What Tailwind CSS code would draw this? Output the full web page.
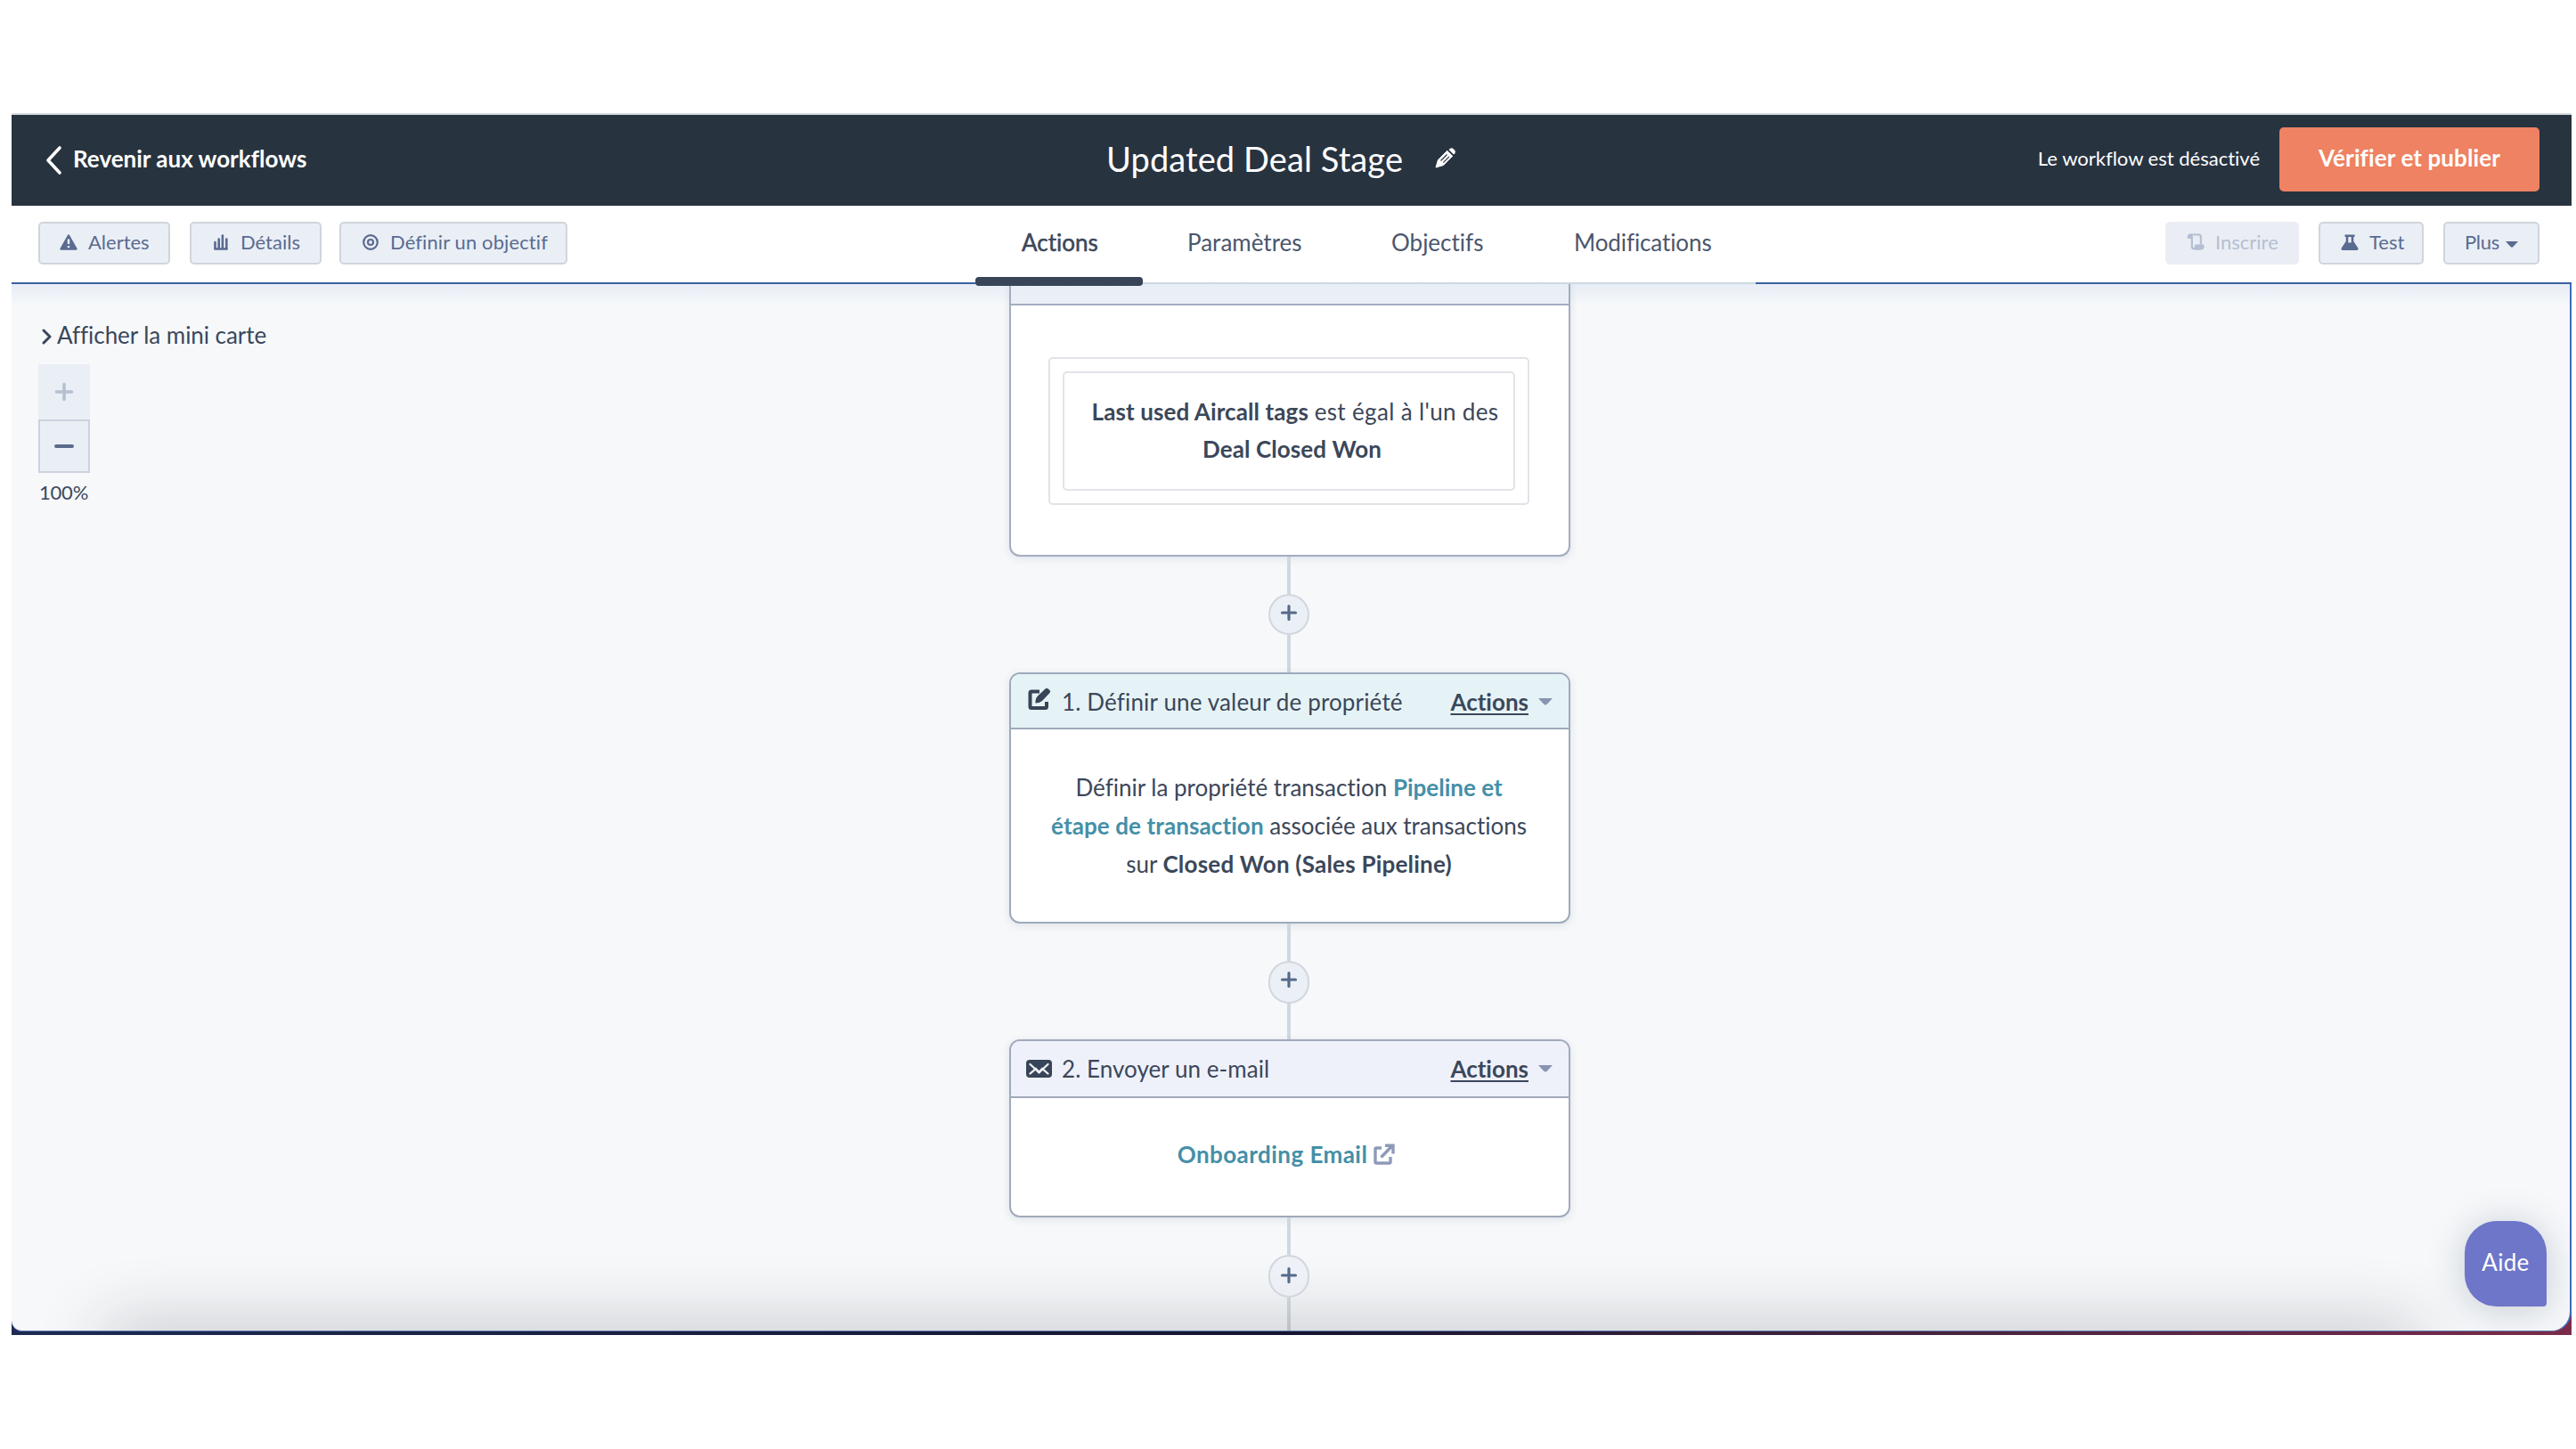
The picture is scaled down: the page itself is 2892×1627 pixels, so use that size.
<!DOCTYPE html>
<html lang="fr">
<head>
    <meta charset="UTF-8">
    <meta name="viewport" content="width=device-width, initial-scale=1.0">
    <title>Updated Deal Stage</title>
    <script src="https://cdn.jsdelivr.net/npm/@tailwindcss/browser@4"></script>
</head>
<body class="bg-white font-['Lato',sans-serif] text-[26px] text-[#3b475a] whitespace-nowrap [font-variant-ligatures:none]">
    <div class="mt-[127px] ml-[13px] w-[2874px] h-[1372px] flex flex-col border-t-2 border-[#d5dae1]">

        <!-- Header -->
        <header class="h-[102px] shrink-0 flex items-center bg-[#283340] text-white pr-9">
            <div class="w-[1229px] flex items-center pl-[37px] pb-[3px]">
                <svg class="w-[20px] h-[34px] mt-0.5" viewBox="0 0 20 34" fill="none" stroke="currentColor" stroke-width="3.6" stroke-linecap="round" stroke-linejoin="round"><path d="M17 3 L4 17 L17 31"/></svg>
                <span class="ml-[12px] font-bold">Revenir aux workflows</span>
            </div>
            <h1 class="text-[38px] leading-none pb-1 tracking-[0.100px]">Updated Deal Stage</h1>
            <svg class="w-[24px] h-[24px] ml-[36px] mb-1.5" viewBox="0 0 24 24">
                <path d="M1 23 L3.500 14.500 L14 4 L20 10 L9.500 20.500 Z" fill="#fff" stroke="#fff" stroke-width="1" stroke-linejoin="round"/>
                <path d="M15.500 3 L17 1.800 Q19 0.500 21 2.500 L22 3.500 Q23.800 5.500 22.300 7.300 L21 8.600 Z" fill="#fff"/>
                <path d="M14.300 3.600 L20.600 9.900" stroke="#283340" stroke-width="1.300"/>
                <path d="M6.500 15.500 L13.500 8.500 M9.300 17.600 L16 10.900" stroke="#283340" stroke-width="1.200"/>
            </svg>
            <span class="ml-auto text-[22px] pb-[6px]">Le workflow est désactivé</span>
            <button class="ml-[22px] w-[292px] h-[72px] mb-0.5 pb-[3px] rounded-[5px] bg-[#ee8262] font-bold tracking-[0.1px]">Vérifier et publier</button>
        </header>

        <!-- Toolbar -->
        <div class="relative z-10 h-[88px] shrink-0 flex items-start bg-white border-b-2 border-[#3c60a0] text-[22px] text-[#5a6b91]">
            <div class="w-[1082px] flex pl-[30px] pt-[18px]">
                <button class="w-[148px] h-[48px] flex items-center pl-[22px] pb-[3px] rounded-[5px] border-2 border-[#cfd5db] bg-[#eaeff6]">
                    <svg class="w-[20px] h-[18px] mr-3" viewBox="0 0 20 18">
                        <path d="M10 1.500 L18.500 16.500 H1.500 Z" fill="currentColor" stroke="currentColor" stroke-width="2.400" stroke-linejoin="round"/>
                        <path d="M10 5.500 V11 M10 13 V15.200" stroke="#eaeff6" stroke-width="2.400"/>
                    </svg>
                    Alertes
                </button>
                <button class="ml-[22px] w-[148px] h-[48px] flex items-center pl-[25px] pb-[3px] rounded-[5px] border-2 border-[#cfd5db] bg-[#eaeff6]">
                    <svg class="w-[16px] h-[18px] mr-[14px]" viewBox="0 0 16 18" fill="none" stroke="currentColor" stroke-linecap="round">
                        <path d="M1.500 9 V16 M5.700 5.500 V16 M9.900 1.500 V16 M14.300 5.500 V16" stroke-width="2.600"/>
                        <path d="M1.500 16.500 H14.500" stroke-width="2.600"/>
                    </svg>
                    Détails
                </button>
                <button class="ml-[20px] w-[256px] h-[48px] flex items-center pl-[24px] pb-[3px] rounded-[5px] border-2 border-[#cfd5db] bg-[#eaeff6] tracking-[0.1px]">
                    <svg class="w-[18px] h-[18px] mr-[13px]" viewBox="0 0 18 18" fill="none" stroke="currentColor" stroke-width="2.200"><circle cx="9" cy="9" r="7.800"/><circle cx="9" cy="9" r="3"/></svg>
                    Définir un objectif
                </button>
            </div>

            <nav class="relative h-[88px] w-[876px] shrink-0 flex items-center pb-[6px] text-[26px] text-[#4c566b]">
                <div class="absolute left-0 right-0 bottom-0 h-0.5 bg-[#cdd8e1]"></div>
                <div class="absolute left-0 -bottom-0.5 w-[188px] h-[10px] rounded-[4px] bg-[#384457]"></div>
                <a class="w-[188px] pl-[52px] text-[#3b475a] [-webkit-text-stroke:0.5px]">Actions</a>
                <a class="w-[229px] pl-[50px]">Paramètres</a>
                <a class="w-[204px] pl-[50px]">Objectifs</a>
                <a class="pl-[51px] tracking-[-0.1px]">Modifications</a>
            </nav>

            <div class="ml-auto flex pr-9 pt-[18px] gap-[22px]">
                <button class="w-[150px] h-[48px] flex items-center pl-[24px] pb-[3px] rounded-[5px] bg-[#eaeef4] text-[#b5bfd3]">
                    <svg class="w-[20px] h-[19px] mr-3" viewBox="0 0 20 19" fill="none" stroke="currentColor" stroke-width="2.200" stroke-linejoin="round">
                        <path d="M3 1.500 H13.500 Q15.800 1.500 15.800 4 V12.500 M5.800 3 V14.500 Q5.800 17.300 8.500 17.300 H16"/>
                        <path d="M1.200 5.500 V3.500 Q1.200 1.200 3.500 1.200 Q5.800 1.200 5.800 3.500 V5.500 Z" fill="currentColor" stroke-width="1"/>
                        <path d="M9.500 13 H19 V15.500 Q19 18 16.500 18 H9 Z" fill="currentColor" stroke-width="1"/>
                    </svg>
                    Inscrire
                </button>
                <button class="w-[118px] h-[48px] flex items-center pl-[23px] pb-[3px] rounded-[5px] border-2 border-[#cfd5db] bg-[#eaeff6]">
                    <svg class="w-[20px] h-[18px] mr-3" viewBox="0 0 20 18" fill="currentColor">
                        <path d="M4.500 0.500 H15.500 V3 H14.300 V8 L19.300 15.500 Q20 18 18 18 H2 Q0 18 0.700 15.500 L5.700 8 V3 H4.500 Z"/>
                        <path d="M8.300 3 H11.700 V9.500 H8.300 Z" fill="#eaeff6"/>
                    </svg>
                    Test
                </button>
                <button class="w-[108px] h-[48px] flex items-center pl-[22px] pb-[3px] rounded-[5px] border-2 border-[#cfd5db] bg-[#eaeff6] tracking-[-0.3px]">
                    Plus
                    <svg class="w-[14px] h-[7px] ml-[7px] mt-[5px]" viewBox="0 0 14 7"><path d="M0 0 H14 L8.500 6 Q7 7.500 5.500 6 Z" fill="currentColor"/></svg>
                </button>
            </div>
        </div>

        <!-- Canvas -->
        <div class="grow min-h-0 bg-linear-to-r from-[#1d2a52] via-[#15152f] to-[#7c2b4a] pb-1">
            <div class="relative h-full flex overflow-hidden bg-[#f6f8fa] rounded-bl-[12px] rounded-br-[22px] border-b border-b-[#5d78ab] border-r-2 border-r-[#3e6dc0]">
                <div class="absolute inset-x-0 top-0 h-6 bg-linear-to-b from-[#e7edf6] to-transparent"></div>
                <div class="absolute top-full left-[105px] right-[170px] h-10 shadow-[0_0_78px_rgba(30,35,40,0.32)]"></div>

                <aside class="w-[1120px] pl-[30px] pt-[41px]">
                    <div class="flex items-center leading-8 tracking-[-0.050px]">
                        <svg class="w-[12px] h-[18px] ml-1 mr-[5px] mt-1" viewBox="0 0 12 18" fill="none" stroke="currentColor" stroke-width="3" stroke-linecap="round" stroke-linejoin="round"><path d="M2 2 L9 9 L2 16"/></svg>
                        Afficher la mini carte
                    </div>
                    <div class="mt-[17px] w-[58px] h-[62px] flex items-center justify-center bg-[#eaeff5]">
                        <svg class="w-[22px] h-[22px]" viewBox="0 0 22 22" stroke="#b5c0d0" stroke-width="3.600" stroke-linecap="round"><path d="M11 2.500 V19.500 M2.500 11 H19.500"/></svg>
                    </div>
                    <div class="w-[58px] h-[60px] flex items-center justify-center bg-[#eaeff6] border-2 border-[#cbd2de]">
                        <svg class="w-[22px] h-1" viewBox="0 0 22 4" stroke="#5a6b8d" stroke-width="4" stroke-linecap="round"><path d="M2 2 H20"/></svg>
                    </div>
                    <div class="mt-2 pl-[1px] text-[22px] leading-7 tracking-[-0.2px]">100%</div>
                </aside>

                <main class="relative w-[630px] flex flex-col items-center text-center">
                    <!-- Trigger -->
                    <section class="w-[630px] h-[306px] shrink-0 flex flex-col bg-white border-2 border-t-0 border-[#a4acbf] rounded-b-[12px] shadow-[0_2px_10px_rgba(60,75,130,0.12)]">
                        <div class="h-[24px] shrink-0 bg-linear-to-b from-[#e9eef6] to-[#eaf0f6] border-b-2 border-[#a4acbf]"></div>
                        <div class="mt-[58px] ml-[42px] mr-[44px] h-[166px] p-[14px] rounded-[5px] border-2 border-[#e0e3e8]">
                            <div class="h-[134px] pt-[22px] pl-[7px] rounded-[5px] border-2 border-[#e0e3e8] leading-[42px]">
                                <div class="pl-[7px]"><b class="tracking-[0.1px]">Last used Aircall tags</b> <span class="tracking-[0.350px]">est égal à l'un des</span></div>
                                <b class="tracking-[0.1px]">Deal Closed Won</b>
                            </div>
                        </div>
                    </section>

                    <div class="mr-[2px] flex flex-col items-center">
                        <div class="w-1 h-[42px] bg-[#cfd8e1]"></div>
                        <div class="w-[46px] h-[46px] flex justify-center pt-[9px] rounded-full bg-[#ebf0f6] border-2 border-[#d2d6de]">
                            <svg class="w-[20px] h-[20px]" viewBox="0 0 20 20" stroke="#566a8c" stroke-width="3.200" stroke-linecap="round"><path d="M10 2.500 V17.500 M2.500 10 H17.500"/></svg>
                        </div>
                        <div class="w-1 h-[42px] bg-[#cfd8e1]"></div>
                    </div>

                    <!-- Step 1 -->
                    <section class="w-[630px] h-[282px] shrink-0 flex flex-col bg-white border-2 border-[#9daabb] rounded-[12px] overflow-hidden shadow-[0_2px_10px_rgba(60,75,100,0.12)]">
                        <div class="h-[62px] shrink-0 flex items-center pl-[19px] pr-[18px] pt-[2px] bg-[#e6f3f6] border-b-2 border-[#9daabb]">
                            <svg class="w-[26px] h-[26px] mb-[6px]" viewBox="0 0 26 26" fill="none">
                                <path d="M13 4.500 H4 Q2.500 4.500 2.500 6 V21.500 Q2.500 23 4 23 H19.500 Q21 23 21 21.500 V16" stroke="#384457" stroke-width="4"/>
                                <path d="M8.500 17.500 Q8 12 11.500 9 L19.500 1.500 Q21 0 22.500 1.300 L24.500 3 Q26 4.500 24.500 6 L17 14 Q13.500 17.500 8.500 17.500 Z" fill="#384457"/>
                            </svg>
                            <span class="ml-[12px] tracking-[0.150px]">1. Définir une valeur de propriété</span>
                            <b class="ml-auto underline decoration-2 underline-offset-[3px]">Actions</b>
                            <svg class="w-[16px] h-[8px] ml-[11px]" viewBox="0 0 16 8"><path d="M0 0 H16 L10 6.500 Q8 8.500 6 6.500 Z" fill="#8794b2"/></svg>
                        </div>
                        <div class="pt-[44px] pr-[2px] leading-[43px] text-center">
                            Définir la propriété transaction <b class="text-[#458fa7]">Pipeline et</b><br>
                            <b class="text-[#458fa7] tracking-[0.1px]">étape de transaction</b> associée aux transactions<br>
                            sur <b class="tracking-[0.220px]">Closed Won (Sales Pipeline)</b>
                        </div>
                    </section>

                    <div class="mr-[2px] flex flex-col items-center">
                        <div class="w-1 h-[42px] bg-[#cfd8e1]"></div>
                        <div class="w-[46px] h-[48px] flex justify-center pt-[9px] rounded-[23px] bg-[#ebf0f6] border-2 border-[#d2d6de]">
                            <svg class="w-[20px] h-[20px]" viewBox="0 0 20 20" stroke="#566a8c" stroke-width="3.200" stroke-linecap="round"><path d="M10 2.500 V17.500 M2.500 10 H17.500"/></svg>
                        </div>
                        <div class="w-1 h-[40px] bg-[#cfd8e1]"></div>
                    </div>

                    <!-- Step 2 -->
                    <section class="w-[630px] h-[200px] shrink-0 flex flex-col bg-white border-2 border-[#a1a9bc] rounded-[12px] overflow-hidden shadow-[0_2px_10px_rgba(60,75,100,0.12)]">
                        <div class="h-[64px] shrink-0 flex items-center pl-[17px] pr-[18px] bg-[#eff1fa] border-b-2 border-[#a1a9bc]">
                            <svg class="w-[29px] h-[20px]" viewBox="0 0 29 20" fill="none">
                                <rect width="29" height="20" rx="4" fill="#384457"/>
                                <path d="M4.500 5 L12 12 L14.500 14.500 L17 12 L24.500 5 M4.500 15.500 L11 9.800 L14.500 14 L18 9.800 L24.500 15.500" stroke="#eff1fa" stroke-width="2.300" stroke-linecap="round" stroke-linejoin="round"/>
                                <path d="M11.800 9 L14.500 11.500 L17.200 9 V6 H11.800 Z" fill="#384457"/>
                            </svg>
                            <span class="ml-[11px] tracking-[0.050px]">2. Envoyer un e-mail</span>
                            <b class="ml-auto underline decoration-2 underline-offset-[3px]">Actions</b>
                            <svg class="w-[16px] h-[8px] ml-[11px]" viewBox="0 0 16 8"><path d="M0 0 H16 L10 6.500 Q8 8.500 6 6.500 Z" fill="#8794b2"/></svg>
                        </div>
                        <div class="pt-[42px] pr-[8px] flex justify-center items-center leading-[43px]">
                            <b class="text-[#458fa7] tracking-[0.450px]">Onboarding Email</b>
                            <svg class="w-[24px] h-[24px] ml-[7px] mb-px" viewBox="0 0 24 24" fill="none" stroke="#8e9ab8" stroke-width="3.400" stroke-linejoin="round">
                                <path d="M9 5 H3.500 Q2 5 2 6.500 V20.500 Q2 22 3.500 22 H17.500 Q19 22 19 20.500 V15"/>
                                <path d="M8.500 15.500 L20 3.500 M13 2.300 H22 V11.500" stroke-linejoin="miter"/>
                            </svg>
                        </div>
                    </section>

                    <div class="mr-[2px] flex flex-col items-center">
                        <div class="w-1 h-[42px] bg-[#cfd8e1]"></div>
                        <div class="w-[46px] h-[48px] flex justify-center pt-[11px] rounded-[23px] bg-[#ebf0f6]/70 border-2 border-[#d2d6de]">
                            <svg class="w-[20px] h-[20px]" viewBox="0 0 20 20" stroke="#566a8c" stroke-width="3.200" stroke-linecap="round"><path d="M10 2.500 V17.500 M2.500 10 H17.500"/></svg>
                        </div>
                        <div class="w-1 h-[38px] bg-linear-to-b from-[#cbd2da] to-[#b9bfc6]"></div>
                    </div>
                </main>

                <!-- Help button -->
                <button class="absolute right-[26px] bottom-[27px] w-[92px] h-[96px] pb-[3px] rounded-[36px] rounded-br-[4px] bg-[#6d76c8] text-white tracking-[0.300px] shadow-[0_4px_40px_rgba(60,70,90,0.25)]">Aide</button>
            </div>
        </div>
    </div>
</body>
</html>
